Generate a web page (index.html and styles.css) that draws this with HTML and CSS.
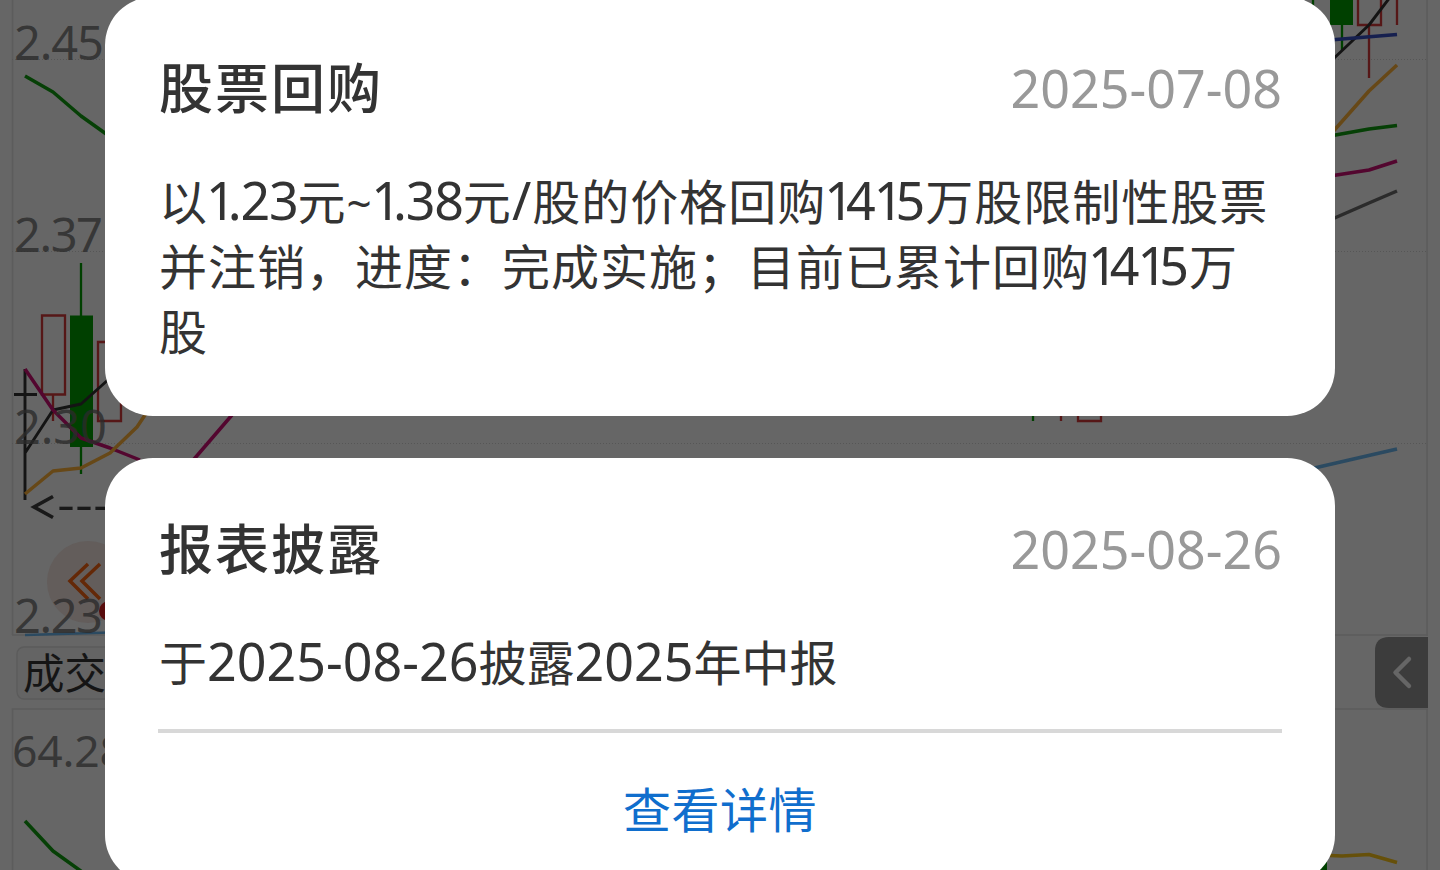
FILE: index.html
```html
<!DOCTYPE html>
<html lang="zh-CN">
<head>
<meta charset="utf-8">
<title>股票回购</title>
<link rel="stylesheet" href="styles.css">
</head>
<body>
<main class="screen">
  <svg class="chart" viewBox="0 0 1440 870" aria-hidden="true">
    <g class="frame">
      <path d="M12.5 0V635M12 635H1428M12.500 870V709H1428M1427 0V636M1427 709V870"/>
      <path class="grid" d="M12 59.500H1428M12 251.500H1428M12 443.500H1428"/>
    </g>
    <rect class="tag" x="17" y="647" width="160" height="52" rx="7"/>
    <g class="up">
      <path d="M42 315.500H65V394.500H42ZM53 395V421M98 342H121V421H98Z"/>
      <path d="M1061 400V421M1078 380H1101V421H1078ZM1358 -10H1381V25H1358ZM1369 25V78M1397 0V25"/>
    </g>
    <g class="down">
      <path d="M81 263V474M1033 400V421M1313 0V10M1342 0V50"/>
      <path class="fill" d="M70 315.500H93V447H70ZM1330 0H1353V25H1330ZM1304 855H1327V870H1304Z"/>
    </g>
    <g class="lines">
      <path class="black" d="M25 369V500M14 394.500H37M25 453L53 410L81 404L109 379M1330 62L1369 25L1394 -8"/>
      <path class="magenta" d="M25 369L53 410L81 438L110 448L140 460M180 475L195 458L232 415M1330 176L1369 170L1397 161"/>
      <path class="gold" d="M25 494L53 471L81 468L110 453L137 427L147 412M1330 135L1369 91L1397 65"/>
      <path class="green" d="M25 76L53 92L81 116L109 136M1330 136L1341 134L1369 129L1397 125.500M25 821L53 851L85 874"/>
      <path class="navy" d="M1330 40L1397 34.500"/>
      <path class="gray" d="M1330 220L1369 203L1397 191"/>
      <path class="sky" d="M1310 469L1397 449"/>
      <path class="sky low" d="M25 635L110 632.500"/>
      <path class="amber" d="M1330 855.500L1342 856L1369 854.500L1397 862.500"/>
    </g>
    <circle class="halo" cx="88" cy="582" r="41"/>
    <path class="chevrons" d="M88 564L70 581L88 599M100 564L82 581L100 599"/>
    <circle class="dot" cx="109" cy="611" r="10"/>
    <g class="scale">
      <text x="14" y="59.500" textLength="90">2.45</text>
      <text x="14" y="251.500" textLength="89">2.37</text>
      <text x="14" y="444" textLength="93">2.30</text>
      <text x="14" y="632.500" textLength="89">2.23</text>
      <text class="volume" x="12" y="766.500" textLength="113">64.28</text>
    </g>
    <path class="mark-arrow" d="M53 496.500L34 507L53 517.500"/>
    <text class="mark" x="57" y="520" textLength="54" lengthAdjust="spacingAndGlyphs">---</text>
    <text class="tagname" x="23" y="689">成交</text>
    <path class="drawer" d="M1428 637H1389Q1375 637 1375 651V694Q1375 708 1389 708H1428Z"/>
    <path class="drawer-arrow" d="M1409 659L1395.500 672.500L1409 686"/>
  </svg>

  <section class="stack">
    <article class="card first">
      <header class="head"><h2 class="title">股票回购</h2><time class="date">2025-07-08</time></header>
      <p class="body">
        <span class="line">以<span class="num tight"><span class="one">1</span>.23</span>元<span class="num tight"><span class="tilde">~</span><span class="one">1</span>.38</span>元<span class="num slash">/</span>股的价格回购<span class="num"><span class="one">1</span>4<span class="one">1</span>5</span>万股限制性股票</span>
        <span class="line">并注销，进度：完成实施；目前已累计回购<span class="num"><span class="one">1</span>4<span class="one">1</span>5</span>万</span>
        <span class="line">股</span>
      </p>
    </article>
    <article class="card second">
      <header class="head"><h2 class="title">报表披露</h2><time class="date">2025-08-26</time></header>
      <p class="body compact"><span class="line">于<span class="num">2025-08-26</span>披露<span class="num">2025</span>年中报</span></p>
      <a class="action">查看详情</a>
    </article>
  </section>
</main>
</body>
</html>
```
FILE: styles.css
```css
* { box-sizing: border-box; }
body { margin: 0; background: #666; font-family: "Noto Sans", "Noto Sans CJK SC", sans-serif; }
.screen { position: relative; width: 1440px; height: 870px; overflow: hidden; background: #666; }
.chart { position: absolute; inset: 0; width: 1440px; height: 870px; }
.frame path { fill: none; stroke: #5c5c5c; stroke-width: 1.6; }
.frame .grid { stroke: #565656; stroke-width: 1; stroke-dasharray: 1 2; }
.tag { fill: #646464; stroke: #5b5b5b; stroke-width: 1.3; }
.up path { fill: none; stroke: #561717; stroke-width: 2.3; }
.down path { fill: none; stroke: #004000; stroke-width: 2.3; }
.down .fill { fill: #004000; stroke: none; }
.lines path { fill: none; stroke-width: 3.5; stroke-linejoin: round; }
.lines .black { stroke: #141414; stroke-width: 2.9; }
.lines .magenta { stroke: #53062f; }
.lines .gold { stroke: #674817; }
.lines .green { stroke: #064006; }
.lines .navy { stroke: #16204f; }
.lines .gray { stroke: #2b2b2b; }
.lines .sky { stroke: #2b4a61; }
.lines .low { stroke-width: 2.5; }
.lines .amber { stroke: #66500a; }
.halo { fill: #635d5b; }
.chevrons { fill: none; stroke: #642807; stroke-width: 3.5; }
.dot { fill: #580c0c; }
.scale { font-size: 47px; fill: rgba(43, 43, 43, .8); }
.scale .volume { font-size: 44.500px; }
.mark { font-family: "Liberation Sans", sans-serif; font-size: 43px; fill: #191919; }
.mark-arrow { fill: none; stroke: #191919; stroke-width: 3.6; }
.tagname { font-family: "Noto Sans CJK SC", sans-serif; font-size: 41.500px; fill: #151515; }
.drawer { fill: #3c3c3c; }
.drawer-arrow { fill: none; stroke: #666; stroke-width: 4.5; stroke-linecap: round; stroke-linejoin: round; }

.stack { position: relative; display: flex; flex-direction: column; gap: 42px; width: 1230px; margin: 0 auto; transform: translateY(-3px); }
.card { display: flex; flex-direction: column; flex: none; padding: 49px 53px 0; border-radius: 48px; background: #fff; color: #333; }
.first { height: 419px; }
.second { height: 425px; }
.head { display: flex; align-items: center; justify-content: space-between; height: 80px; padding-left: 1px; }
.title { margin: 0; font-family: "Noto Sans CJK SC", sans-serif; font-size: 54px; font-weight: 500; line-height: 80px; letter-spacing: 2px; }
.date { margin-top: 4px; color: #999; font-size: 52px; line-height: 80px; letter-spacing: 0; }
.body { margin: 41px 0 0 1px; font-family: "Noto Sans CJK SC", sans-serif; font-size: 48px; letter-spacing: 1px; }
.line { display: block; height: 65px; line-height: 65px; white-space: nowrap; }
.num { font-family: "Noto Sans", sans-serif; font-size: 52px; line-height: 1; letter-spacing: 0; }
.tight { letter-spacing: -1.200px; }
.one { margin-left: -2px; letter-spacing: -8px; }
.tilde { font-size: 44px; letter-spacing: 1.5px; }
.slash { letter-spacing: 1px; }
.compact { height: 101px; letter-spacing: 0; }
.action { display: flex; align-items: center; justify-content: center; height: 154px; padding-bottom: 3px; border-top: 4px solid #d8d8d8; color: #106ecd; font-family: "Noto Sans CJK SC", sans-serif; font-size: 48px; letter-spacing: .5px; }
```
